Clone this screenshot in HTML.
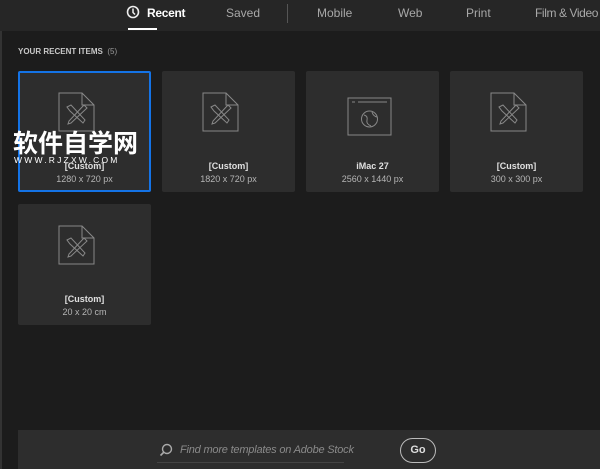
<html><head><style>
body{margin:0;width:600px;height:469px;background:#1c1c1c;font-family:"Liberation Sans",sans-serif;position:relative;overflow:hidden}
.top{position:absolute;left:0;top:0;width:600px;height:31px;background:#262626}
.tab{position:absolute;top:6px;font-size:12px;color:#a8a8a8;white-space:nowrap}
.card{position:absolute;width:133px;height:121px;background:#2d2d2d;border-radius:2px}
.card svg{position:absolute;left:40px;top:21px}
.n{position:absolute;top:90px;width:100%;text-align:center;font-size:9px;color:#e0e0e0;font-weight:bold}
.s{position:absolute;top:103px;width:100%;text-align:center;font-size:9px;color:#b5b5b5}
</style></head><body>
<div style="position:absolute;left:0;top:0;width:2px;height:469px;background:#333"></div>
<div class="top"></div>
<svg style="position:absolute;left:126px;top:5px" width="14" height="14"><circle cx="7" cy="7" r="5.5" fill="none" stroke="#eee" stroke-width="1.6"/><path d="M7 3.5V7.5L9 9.5" stroke="#eee" stroke-width="1.5" fill="none"/></svg>
<div class="tab" style="left:147px;color:#fff;font-weight:bold;letter-spacing:-0.3px">Recent</div>
<div style="position:absolute;left:128px;top:28px;width:29px;height:2px;background:#fff"></div>
<div class="tab" style="left:226px">Saved</div>
<div style="position:absolute;left:287px;top:4px;width:1px;height:19px;background:#555"></div>
<div class="tab" style="left:317px">Mobile</div>
<div class="tab" style="left:398px">Web</div>
<div class="tab" style="left:466px">Print</div>
<div class="tab" style="left:535px;letter-spacing:-0.4px">Film &amp; Video</div>
<div style="position:absolute;left:18px;top:47px;font-size:8px;color:#c8c8c8;font-weight:bold">YOUR RECENT ITEMS <span style="font-weight:normal;color:#999">&nbsp;(5)</span></div>

<div class="card" style="left:18px;top:71px;box-shadow:inset 0 0 0 2px #1473e6"><svg width="40" height="42"><path d="M1 1H24L36 13V39H1Z M24 1V13H36" fill="none" stroke="#888" stroke-width="1"/><path d="M9 15L13 13L27 28L25 31L12 19Z M26 13L29 16L13 31L10 32L11 29Z" stroke="#888" fill="none"/></svg><div class="n">[Custom]</div><div class="s">1280 x 720 px</div></div>
<div class="card" style="left:162px;top:71px"><svg width="40" height="42"><path d="M1 1H24L36 13V39H1Z M24 1V13H36" fill="none" stroke="#888" stroke-width="1"/><path d="M9 15L13 13L27 28L25 31L12 19Z M26 13L29 16L13 31L10 32L11 29Z" stroke="#888" fill="none"/></svg><div class="n">[Custom]</div><div class="s">1820 x 720 px</div></div>
<div class="card" style="left:306px;top:71px"><svg width="50" height="42" style="left:41px;top:26px"><rect x="1" y="1" width="43" height="37" fill="none" stroke="#888"/><path d="M5 5H8M11 5H40" stroke="#888"/><circle cx="22.5" cy="22" r="8" fill="none" stroke="#888"/><path d="M17 18Q21 19 20 23T24 29M25 15Q26 19 30 20" stroke="#888" fill="none"/></svg><div class="n">iMac 27</div><div class="s">2560 x 1440 px</div></div>
<div class="card" style="left:450px;top:71px"><svg width="40" height="42"><path d="M1 1H24L36 13V39H1Z M24 1V13H36" fill="none" stroke="#888" stroke-width="1"/><path d="M9 15L13 13L27 28L25 31L12 19Z M26 13L29 16L13 31L10 32L11 29Z" stroke="#888" fill="none"/></svg><div class="n">[Custom]</div><div class="s">300 x 300 px</div></div>
<div class="card" style="left:18px;top:204px"><svg width="40" height="42"><path d="M1 1H24L36 13V39H1Z M24 1V13H36" fill="none" stroke="#888" stroke-width="1"/><path d="M9 15L13 13L27 28L25 31L12 19Z M26 13L29 16L13 31L10 32L11 29Z" stroke="#888" fill="none"/></svg><div class="n">[Custom]</div><div class="s">20 x 20 cm</div></div>

<div style="position:absolute;left:13px;top:127px;font-size:25px;color:#fff;font-family:'Noto Sans CJK SC',sans-serif;font-weight:bold;line-height:30px">软件自学网</div>
<div style="position:absolute;left:14px;top:155px;font-size:8.5px;color:#fff;letter-spacing:2.2px">WWW.RJZXW.COM</div>

<div style="position:absolute;left:18px;top:430px;width:582px;height:39px;background:#2d2d2d"></div>
<svg style="position:absolute;left:159px;top:443px" width="14" height="14"><circle cx="8" cy="6" r="4.5" fill="none" stroke="#aaa" stroke-width="1.4"/><path d="M5 9L1.5 12.5" stroke="#aaa" stroke-width="1.6"/></svg>
<div style="position:absolute;left:180px;top:444px;font-size:11px;font-style:italic;color:#8a8a8a;letter-spacing:-0.2px">Find more templates on Adobe Stock</div>
<div style="position:absolute;left:157px;top:462px;width:187px;height:1px;background:#444"></div>
<div style="position:absolute;left:400px;top:438px;width:36px;height:25px;border:1.5px solid #bbb;border-radius:13px;box-sizing:border-box;color:#ddd;font-size:11px;font-weight:bold;text-align:center;line-height:23px">Go</div>
</body></html>
